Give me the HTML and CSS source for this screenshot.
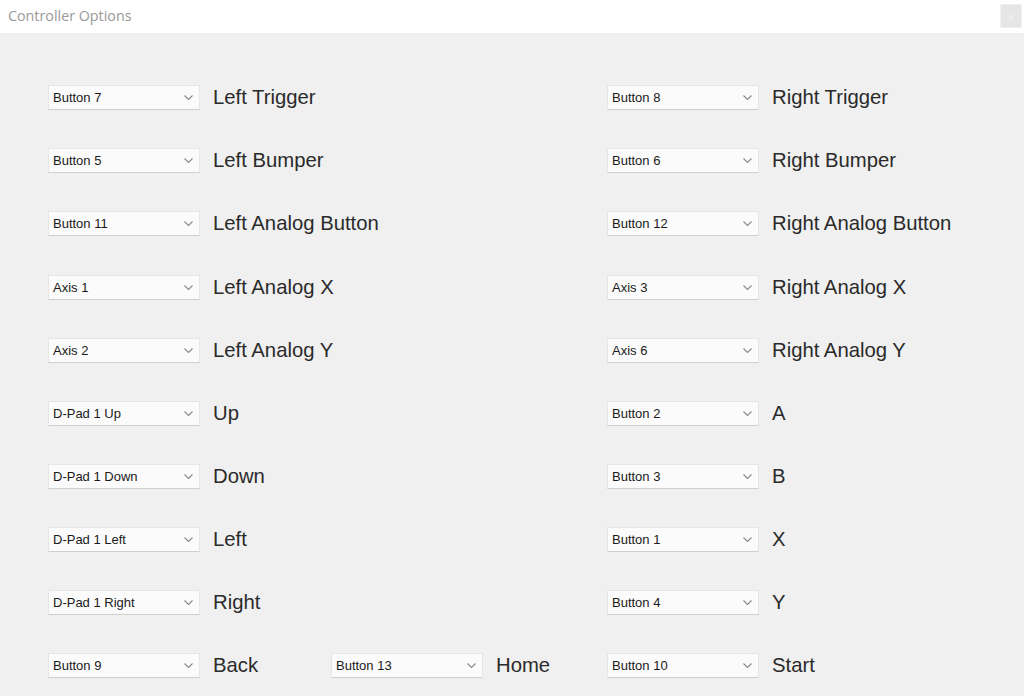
FILE: index.html
```html
<!DOCTYPE html>
<html>
<head>
<meta charset="utf-8">
<title>Controller Options</title>
<link rel="stylesheet" href="styles.css">
</head>
<body>
<div class="window">
  <div class="titlebar">
    <span class="title">Controller Options</span>
    <div class="close">×</div>
  </div>
  <div class="content">
    <div class="cell"><div class="pair"><div class="combo"><span>Button 7</span><svg class="chev" viewBox="0 0 9 5"><path d="M0.5 0.5 L4.5 4.5 L8.5 0.5"/></svg></div><span class="label">Left Trigger</span></div></div>
    <div class="cell"><div class="pair"><div class="combo"><span>Button 8</span><svg class="chev" viewBox="0 0 9 5"><path d="M0.5 0.5 L4.5 4.5 L8.5 0.5"/></svg></div><span class="label">Right Trigger</span></div></div>

    <div class="cell"><div class="pair"><div class="combo"><span>Button 5</span><svg class="chev" viewBox="0 0 9 5"><path d="M0.5 0.5 L4.5 4.5 L8.5 0.5"/></svg></div><span class="label">Left Bumper</span></div></div>
    <div class="cell"><div class="pair"><div class="combo"><span>Button 6</span><svg class="chev" viewBox="0 0 9 5"><path d="M0.5 0.5 L4.5 4.5 L8.5 0.5"/></svg></div><span class="label">Right Bumper</span></div></div>

    <div class="cell"><div class="pair"><div class="combo"><span>Button 11</span><svg class="chev" viewBox="0 0 9 5"><path d="M0.5 0.5 L4.5 4.5 L8.5 0.5"/></svg></div><span class="label">Left Analog Button</span></div></div>
    <div class="cell"><div class="pair"><div class="combo"><span>Button 12</span><svg class="chev" viewBox="0 0 9 5"><path d="M0.5 0.5 L4.5 4.5 L8.5 0.5"/></svg></div><span class="label">Right Analog Button</span></div></div>

    <div class="cell"><div class="pair"><div class="combo"><span>Axis 1</span><svg class="chev" viewBox="0 0 9 5"><path d="M0.5 0.5 L4.5 4.5 L8.5 0.5"/></svg></div><span class="label">Left Analog X</span></div></div>
    <div class="cell"><div class="pair"><div class="combo"><span>Axis 3</span><svg class="chev" viewBox="0 0 9 5"><path d="M0.5 0.5 L4.5 4.5 L8.5 0.5"/></svg></div><span class="label">Right Analog X</span></div></div>

    <div class="cell"><div class="pair"><div class="combo"><span>Axis 2</span><svg class="chev" viewBox="0 0 9 5"><path d="M0.5 0.5 L4.5 4.5 L8.5 0.5"/></svg></div><span class="label">Left Analog Y</span></div></div>
    <div class="cell"><div class="pair"><div class="combo"><span>Axis 6</span><svg class="chev" viewBox="0 0 9 5"><path d="M0.5 0.5 L4.5 4.5 L8.5 0.5"/></svg></div><span class="label">Right Analog Y</span></div></div>

    <div class="cell"><div class="pair"><div class="combo"><span>D-Pad 1 Up</span><svg class="chev" viewBox="0 0 9 5"><path d="M0.5 0.5 L4.5 4.5 L8.5 0.5"/></svg></div><span class="label">Up</span></div></div>
    <div class="cell"><div class="pair"><div class="combo"><span>Button 2</span><svg class="chev" viewBox="0 0 9 5"><path d="M0.5 0.5 L4.5 4.5 L8.5 0.5"/></svg></div><span class="label">A</span></div></div>

    <div class="cell"><div class="pair"><div class="combo"><span>D-Pad 1 Down</span><svg class="chev" viewBox="0 0 9 5"><path d="M0.5 0.5 L4.5 4.5 L8.5 0.5"/></svg></div><span class="label">Down</span></div></div>
    <div class="cell"><div class="pair"><div class="combo"><span>Button 3</span><svg class="chev" viewBox="0 0 9 5"><path d="M0.5 0.5 L4.5 4.5 L8.5 0.5"/></svg></div><span class="label">B</span></div></div>

    <div class="cell"><div class="pair"><div class="combo"><span>D-Pad 1 Left</span><svg class="chev" viewBox="0 0 9 5"><path d="M0.5 0.5 L4.5 4.5 L8.5 0.5"/></svg></div><span class="label">Left</span></div></div>
    <div class="cell"><div class="pair"><div class="combo"><span>Button 1</span><svg class="chev" viewBox="0 0 9 5"><path d="M0.5 0.5 L4.5 4.5 L8.5 0.5"/></svg></div><span class="label">X</span></div></div>

    <div class="cell"><div class="pair"><div class="combo"><span>D-Pad 1 Right</span><svg class="chev" viewBox="0 0 9 5"><path d="M0.5 0.5 L4.5 4.5 L8.5 0.5"/></svg></div><span class="label">Right</span></div></div>
    <div class="cell"><div class="pair"><div class="combo"><span>Button 4</span><svg class="chev" viewBox="0 0 9 5"><path d="M0.5 0.5 L4.5 4.5 L8.5 0.5"/></svg></div><span class="label">Y</span></div></div>

    <div class="cell">
      <div class="pair pair-back"><div class="combo"><span>Button 9</span><svg class="chev" viewBox="0 0 9 5"><path d="M0.5 0.5 L4.5 4.5 L8.5 0.5"/></svg></div><span class="label">Back</span></div>
      <div class="pair"><div class="combo"><span>Button 13</span><svg class="chev" viewBox="0 0 9 5"><path d="M0.5 0.5 L4.5 4.5 L8.5 0.5"/></svg></div><span class="label">Home</span></div>
    </div>
    <div class="cell"><div class="pair"><div class="combo"><span>Button 10</span><svg class="chev" viewBox="0 0 9 5"><path d="M0.5 0.5 L4.5 4.5 L8.5 0.5"/></svg></div><span class="label">Start</span></div></div>
  </div>
</div>
</body>
</html>
```

FILE: styles.css
```css
html, body {
  margin: 0;
  padding: 0;
  background: #f0f0f0;
}

.window {
  width: 1024px;
  height: 696px;
  overflow: hidden;
  background: #f0f0f0;
  font-family: "Liberation Sans", Arial, sans-serif;
}

.titlebar {
  height: 33px;
  background: #ffffff;
  display: flex;
  align-items: center;
  justify-content: space-between;
  padding: 0 2px 0 8px;
  box-sizing: border-box;
}

.title {
  font-family: "Open Sans", "Noto Sans", sans-serif;
  font-size: 14.3px;
  color: #999999;
  margin-top: -3px;
}

.close {
  width: 22px;
  height: 24px;
  margin-top: -2px;
  background: #e6e6e6;
  border: 1px solid #f0f0f0;
  color: #f4f4f4;
  font-size: 11px;
  line-height: 24px;
  text-align: center;
  box-sizing: border-box;
}

.content {
  display: grid;
  grid-template-columns: 559px 1fr;
  grid-auto-rows: 63.17px;
  padding: 33px 0 0 48px;
}

.cell {
  display: flex;
  align-items: center;
}

.pair {
  display: flex;
  align-items: center;
  gap: 14px;
}

.pair-back {
  width: 283px;
}

.combo {
  width: 152px;
  height: 25px;
  box-sizing: border-box;
  background: #fbfbfb;
  border: 1px solid #e6e6e6;
  border-bottom-color: #cfcfcf;
  display: flex;
  align-items: center;
  justify-content: space-between;
  padding: 0 6px 0 4px;
  font-size: 13px;
  color: #1a1a1a;
  flex-shrink: 0;
}

.chev {
  width: 9px;
  height: 5px;
  fill: none;
  stroke: #8a8a8a;
  stroke-width: 1.1;
}

.label {
  font-size: 20.3px;
  color: #2a2a2a;
  white-space: nowrap;
  margin-left: -1px;
}
```
